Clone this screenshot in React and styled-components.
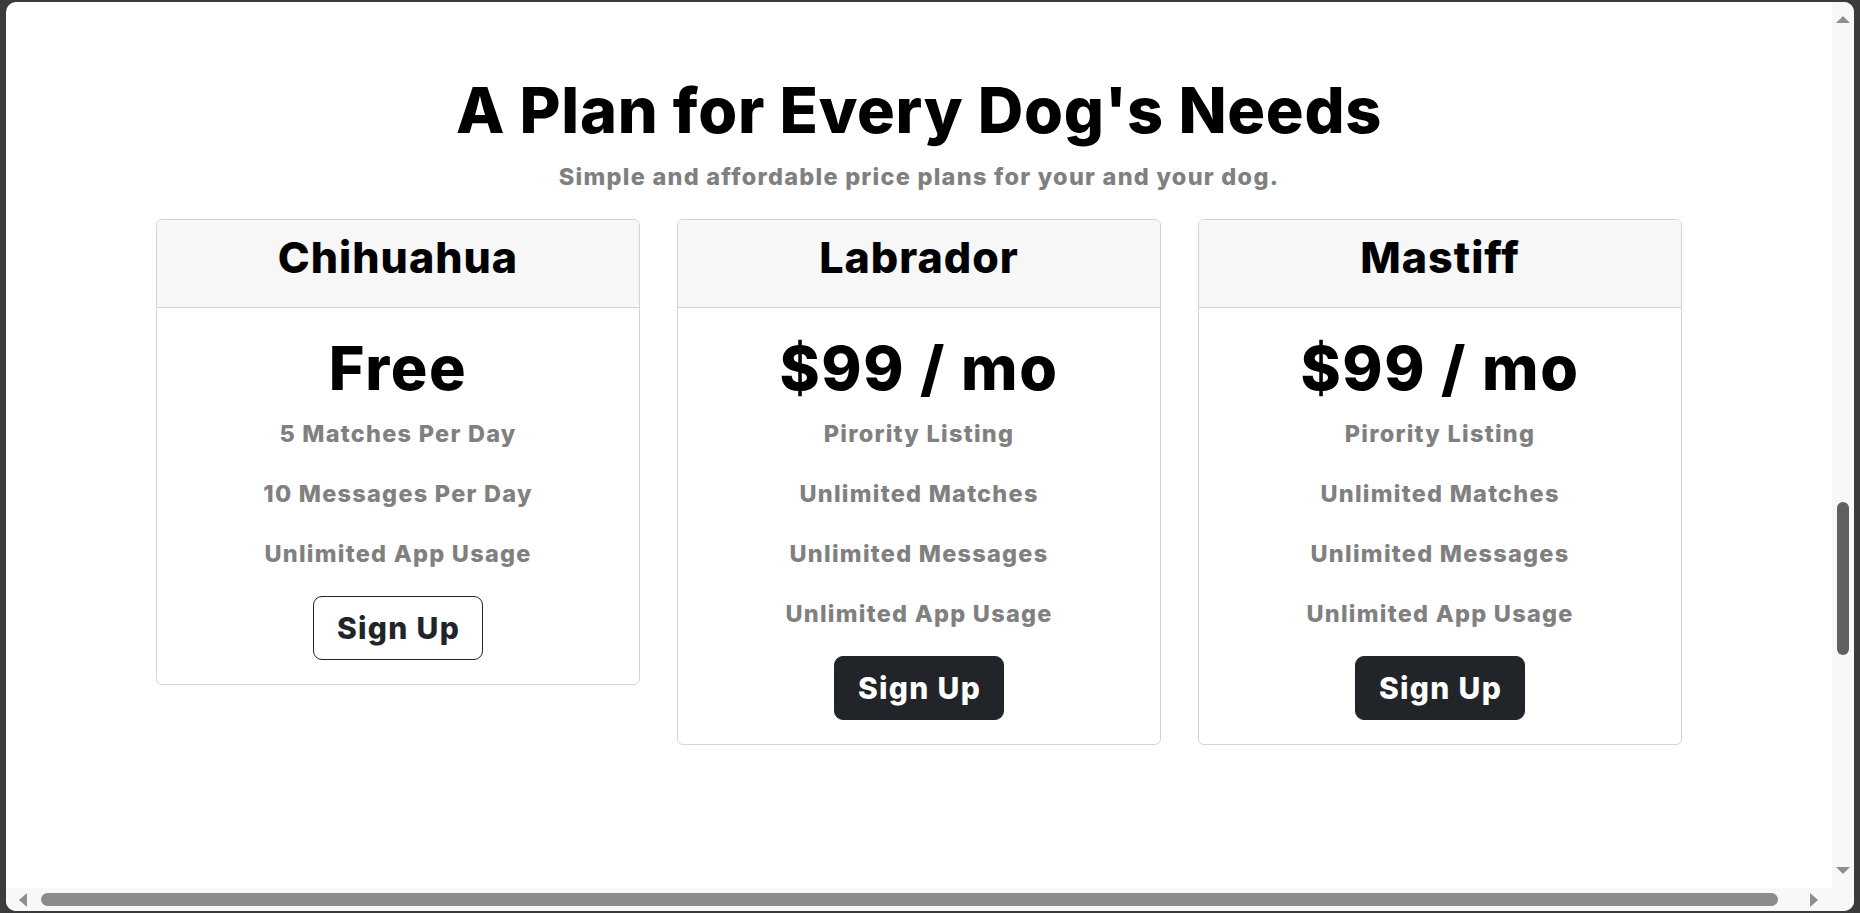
import React from 'react';
import styled, { createGlobalStyle } from 'styled-components';

const colors = {
  frame: '#3b3b3b',
  track: '#f8f8f8',
  thumb: '#8b8b8b',
  thumbActive: '#606060',
  arrow: '#8e8e8e',
  border: '#d4d4d4',
  headerBg: '#f7f7f7',
  muted: '#808080',
  dark: '#212529',
};

const GlobalStyle = createGlobalStyle`
  html, body {
    margin: 0;
    height: 100%;
    background: ${colors.frame};
  }
  body {
    font-family: 'Inter', 'Liberation Sans', sans-serif;
    overflow: hidden;
  }
  #root {
    height: 100%;
  }
`;

const Frame = styled.div`
  height: 100%;
  box-sizing: border-box;
  padding: 2px 6px 2px 6px;
`;

const Window = styled.div`
  height: 100%;
  background: #fff;
  border-radius: 10px;
  overflow: hidden;
  display: grid;
  grid-template-columns: 1fr 22px;
  grid-template-rows: 1fr 23px;
`;

const Viewport = styled.main`
  overflow: hidden;
  display: flex;
  flex-direction: column;
  align-items: center;
  padding-top: 70px;
`;

const Title = styled.h1`
  margin: 0;
  font-size: 63px;
  line-height: 76px;
  font-weight: 800;
  letter-spacing: 0.7px;
  color: #000;
`;

const Lead = styled.p`
  margin: 14px 0 0;
  font-size: 23.5px;
  line-height: 29px;
  font-weight: 800;
  letter-spacing: 1.25px;
  color: ${colors.muted};
`;

const PlanGrid = styled.section`
  margin-top: 28px;
  display: grid;
  grid-template-columns: repeat(3, 484px);
  gap: 37px;
  align-items: start;
`;

const Card = styled.article`
  box-sizing: border-box;
  border: 1px solid ${colors.border};
  border-radius: 6px;
  overflow: hidden;
  text-align: center;
`;

const CardHeader = styled.header`
  background: ${colors.headerBg};
  border-bottom: 1px solid ${colors.border};
  padding: 11px 0 24px;
`;

const PlanName = styled.h2`
  margin: 0;
  font-size: 43px;
  line-height: 52px;
  font-weight: 800;
  letter-spacing: 1px;
  color: #000;
`;

const CardBody = styled.div`
  padding: 24px 0 24px;
  display: flex;
  flex-direction: column;
  align-items: center;
`;

const Price = styled.div`
  font-size: 61px;
  line-height: 72px;
  font-weight: 800;
  letter-spacing: 1.6px;
  color: #000;
`;

const Features = styled.ul`
  list-style: none;
  margin: 0 0 12px;
  padding: 0;
`;

const Feature = styled.li`
  font-size: 23.5px;
  line-height: 60px;
  font-weight: 800;
  letter-spacing: 1.25px;
  color: ${colors.muted};
`;

const SignUp = styled.button`
  height: 64px;
  padding: 0 22px 0 23px;
  font-family: inherit;
  font-size: 30px;
  font-weight: 800;
  letter-spacing: 1.3px;
  border-radius: 9px;
  border: 1px solid ${colors.dark};
  background: ${(p) => (p.$solid ? colors.dark : '#fff')};
  color: ${(p) => (p.$solid ? '#fff' : colors.dark)};
  cursor: pointer;
`;

const VTrack = styled.div`
  background: ${colors.track};
  display: flex;
  flex-direction: column;
  align-items: center;
  padding: 14px 0;
`;

const HTrack = styled.div`
  background: ${colors.track};
  display: flex;
  align-items: center;
  padding: 0 14px 0 13px;
`;

const Corner = styled.div`
  background: ${colors.track};
`;

const Arrow = styled.span`
  width: 0;
  height: 0;
  flex: none;
  border-style: solid;
  border-color: transparent;
  ${(p) =>
    p.$dir === 'up'
      ? `border-width: 0 7px 7px; border-bottom-color: ${colors.arrow};`
      : p.$dir === 'down'
      ? `border-width: 7px 7px 0; border-top-color: ${colors.arrow};`
      : p.$dir === 'left'
      ? `border-width: 7px 8px 7px 0; border-right-color: ${colors.arrow};`
      : `border-width: 7px 0 7px 8px; border-left-color: ${colors.arrow};`}
`;

const VSpace = styled.div`
  flex: 1;
  width: 12px;
  display: flex;
  flex-direction: column;
`;

const VThumb = styled.div`
  width: 12px;
  height: 153px;
  flex: none;
  border-radius: 6px;
  background: ${colors.thumbActive};
`;

const HThumb = styled.div`
  flex: 1;
  height: 13px;
  margin: 0 32px 0 14px;
  border-radius: 7px;
  background: ${colors.thumb};
`;

const plans = [
  {
    name: 'Chihuahua',
    price: 'Free',
    features: ['5 Matches Per Day', '10 Messages Per Day', 'Unlimited App Usage'],
    solid: false,
  },
  {
    name: 'Labrador',
    price: '$99 / mo',
    features: ['Pirority Listing', 'Unlimited Matches', 'Unlimited Messages', 'Unlimited App Usage'],
    solid: true,
  },
  {
    name: 'Mastiff',
    price: '$99 / mo',
    features: ['Pirority Listing', 'Unlimited Matches', 'Unlimited Messages', 'Unlimited App Usage'],
    solid: true,
  },
];

// where the page is scrolled to, as a share of the free track
const scrollTop = 0.693;

const App = () => {
  return (
    <>
      <GlobalStyle />
      <Frame>
        <Window>
          <Viewport>
            <Title>A Plan for Every Dog's Needs</Title>
            <Lead>Simple and affordable price plans for your and your dog.</Lead>
            <PlanGrid>
              {plans.map((plan) => (
                <Card key={plan.name}>
                  <CardHeader>
                    <PlanName>{plan.name}</PlanName>
                  </CardHeader>
                  <CardBody>
                    <Price>{plan.price}</Price>
                    <Features>
                      {plan.features.map((f) => (
                        <Feature key={f}>{f}</Feature>
                      ))}
                    </Features>
                    <SignUp $solid={plan.solid}>Sign Up</SignUp>
                  </CardBody>
                </Card>
              ))}
            </PlanGrid>
          </Viewport>
          <VTrack>
            <Arrow $dir="up" />
            <VSpace>
              <div style={{ flex: scrollTop }} />
              <VThumb />
              <div style={{ flex: 1 - scrollTop }} />
            </VSpace>
            <Arrow $dir="down" />
          </VTrack>
          <HTrack>
            <Arrow $dir="left" />
            <HThumb />
            <Arrow $dir="right" />
          </HTrack>
          <Corner />
        </Window>
      </Frame>
    </>
  );
};

export default App;
